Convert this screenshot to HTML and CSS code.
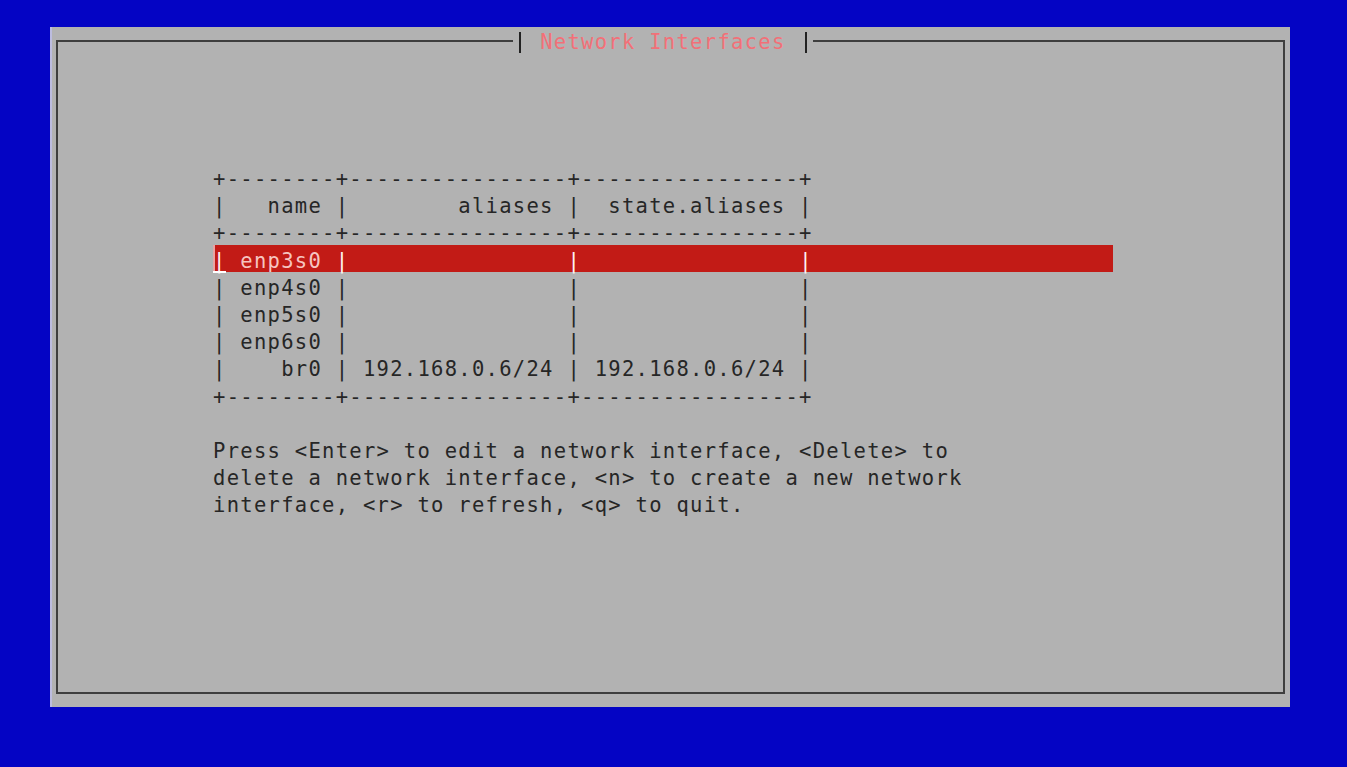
FILE: index.html
```html
<!DOCTYPE html>
<html lang="en">
  <head>
    <meta charset="UTF-8" />
    <meta name="viewport" content="width=device-width, initial-scale=1.0" />
    <title>Network Interfaces</title>
    <link rel="stylesheet" href="styles.css">
  </head>
  <body>
    <div class="panel">
      <div class="frame">
        <h1 class="title"><span>Network Interfaces</span></h1>
        <div class="table">
          <div class="row">+--------+----------------+----------------+</div>
          <div class="row">|   name |        aliases |  state.aliases |</div>
          <div class="row">+--------+----------------+----------------+</div>
          <div class="row sel"><span class="bar">|</span> enp3s0 <span class="bar">|</span>                <span class="bar">|</span>                <span class="bar">|</span></div>
          <div class="row">| enp4s0 |                |                |</div>
          <div class="row">| enp5s0 |                |                |</div>
          <div class="row">| enp6s0 |                |                |</div>
          <div class="row">|    br0 | 192.168.0.6/24 | 192.168.0.6/24 |</div>
          <div class="row">+--------+----------------+----------------+</div>
        </div>
        <div class="help">
          <div class="row">Press &lt;Enter&gt; to edit a network interface, &lt;Delete&gt; to</div>
          <div class="row">delete a network interface, &lt;n&gt; to create a new network</div>
          <div class="row">interface, &lt;r&gt; to refresh, &lt;q&gt; to quit.</div>
        </div>
      </div>
    </div>
  </body>
</html>
```

FILE: styles.css
```css
:root {
  --cw: 13.63px;
  --lh: 27.2px;
}
* {
  box-sizing: border-box;
  margin: 0;
  padding: 0;
}
body {
  height: 100vh;
  overflow: hidden;
  background-color: #0404c4;
  padding: 27px 0 0 50px;
  font-family: "DejaVu Sans Mono", monospace;
  font-size: 20.5px;
  /* stretch the glyph advance to the console cell width */
  letter-spacing: calc(var(--cw) - 12.342px);
  color: #262626;
}
.panel {
  width: 1240px;
  height: 680px;
  background-color: #b2b2b2;
  border-left: 2px solid #bcbce0;
  padding: 13px 5px 13px 4px;
}
.frame {
  position: relative;
  height: 100%;
  border: 2px solid #3e3e3e;
  padding: 121px 0 0 155px;
}
.title {
  position: absolute;
  top: -10px;
  left: 455px;
  padding: 0 6px;
  background-color: #b2b2b2;
  font-size: inherit;
  font-weight: normal;
  line-height: 21px;
  color: #f27078;
}
.title span {
  display: block;
  border-left: 2px solid #222;
  border-right: 2px solid #222;
  padding: 0 19.5px 0 19.2px;
}
.row {
  white-space: pre;
  height: var(--lh);
  padding-top: 5px;
  line-height: 23.2px;
}
.sel {
  position: relative;
  width: calc(var(--cw) * 66);
  background-color: #c21b16;
  color: #f6c4c0;
  box-shadow: inset 2px 0 #e8a4a4;
}
.sel .bar {
  color: #fff2f2;
}
/* text cursor on the selected line */
.sel::after {
  content: "";
  position: absolute;
  left: 0;
  bottom: -1px;
  width: 13px;
  height: 2px;
  background-color: #fff;
}
.help {
  margin-top: var(--lh);
}
```
